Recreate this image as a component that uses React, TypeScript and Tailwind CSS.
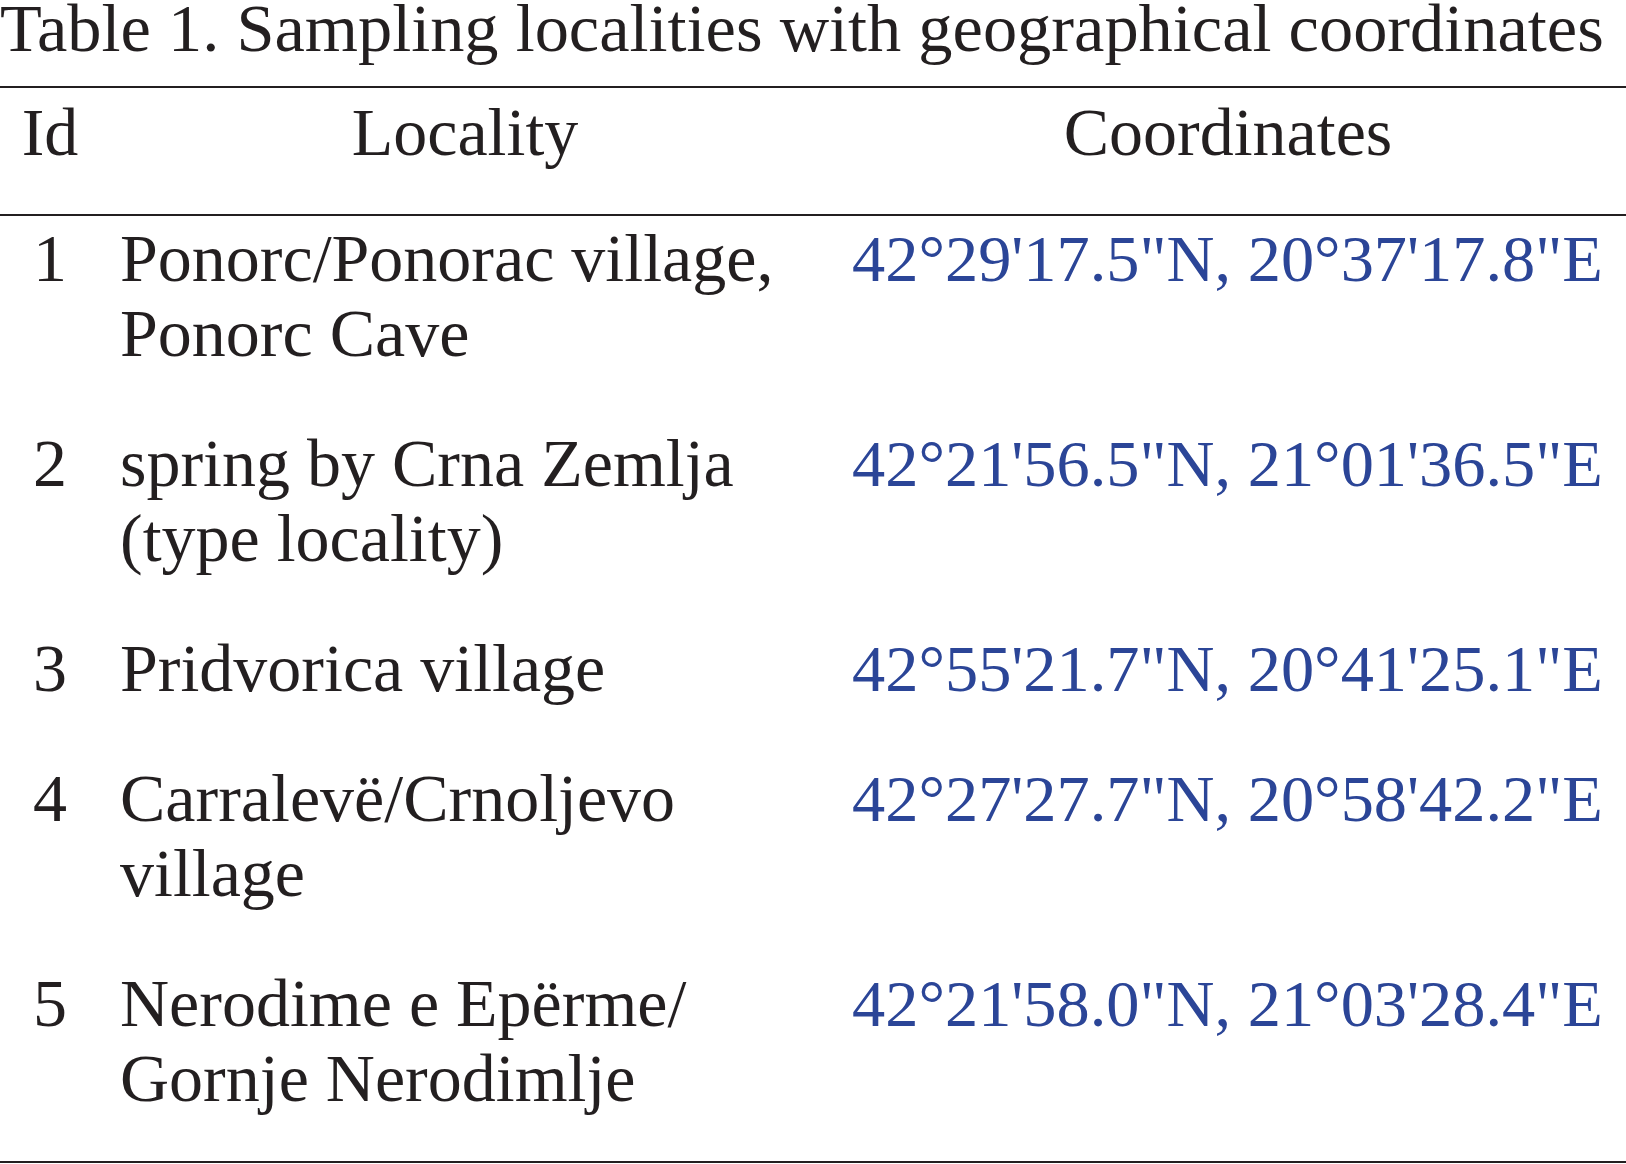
const rows = [
  { id: "1", lines: ["Ponorc/Ponorac village,", "Ponorc Cave"], coord: "42°29'17.5\"N, 20°37'17.8\"E" },
  { id: "2", lines: ["spring by Crna Zemlja", "(type locality)"], coord: "42°21'56.5\"N, 21°01'36.5\"E" },
  { id: "3", lines: ["Pridvorica village"], coord: "42°55'21.7\"N, 20°41'25.1\"E" },
  { id: "4", lines: ["Carralevë/Crnoljevo", "village"], coord: "42°27'27.7\"N, 20°58'42.2\"E" },
  { id: "5", lines: ["Nerodime e Epërme/", "Gornje Nerodimlje"], coord: "42°21'58.0\"N, 21°03'28.4\"E" },
]

export default function App() {
  return (
    <div className="w-[1626px] bg-white text-[#231f20] font-['Liberation_Serif',serif] text-[68px] leading-[75px]">
      <div className="text-[68.4px] leading-[56px] whitespace-nowrap">Table 1. Sampling localities with geographical coordinates</div>

      <div className="mt-[30px] border-t-2 border-[#231f20]" />

      <div className="grid grid-cols-[100px_730px_1fr] pt-[7px] pb-[44px]">
        <div className="text-center">Id</div>
        <div className="text-center">Locality</div>
        <div className="text-center">Coordinates</div>
      </div>

      <div className="border-t-2 border-[#231f20]" />

      <div className="flex flex-col gap-[55px] pt-[5px] pb-[45px]">
        {rows.map((r) => (
          <div key={r.id} className="grid grid-cols-[100px_730px_1fr]">
            <div className="text-center">{r.id}</div>
            <div className="pl-[20px] whitespace-nowrap">
              {r.lines.map((l) => (
                <div key={l}>{l}</div>
              ))}
            </div>
            <div className="pl-[22px] whitespace-nowrap text-[66.4px] text-[#2b4597]">{r.coord}</div>
          </div>
        ))}
      </div>

      <div className="border-t-2 border-[#231f20]" />
    </div>
  )
}
